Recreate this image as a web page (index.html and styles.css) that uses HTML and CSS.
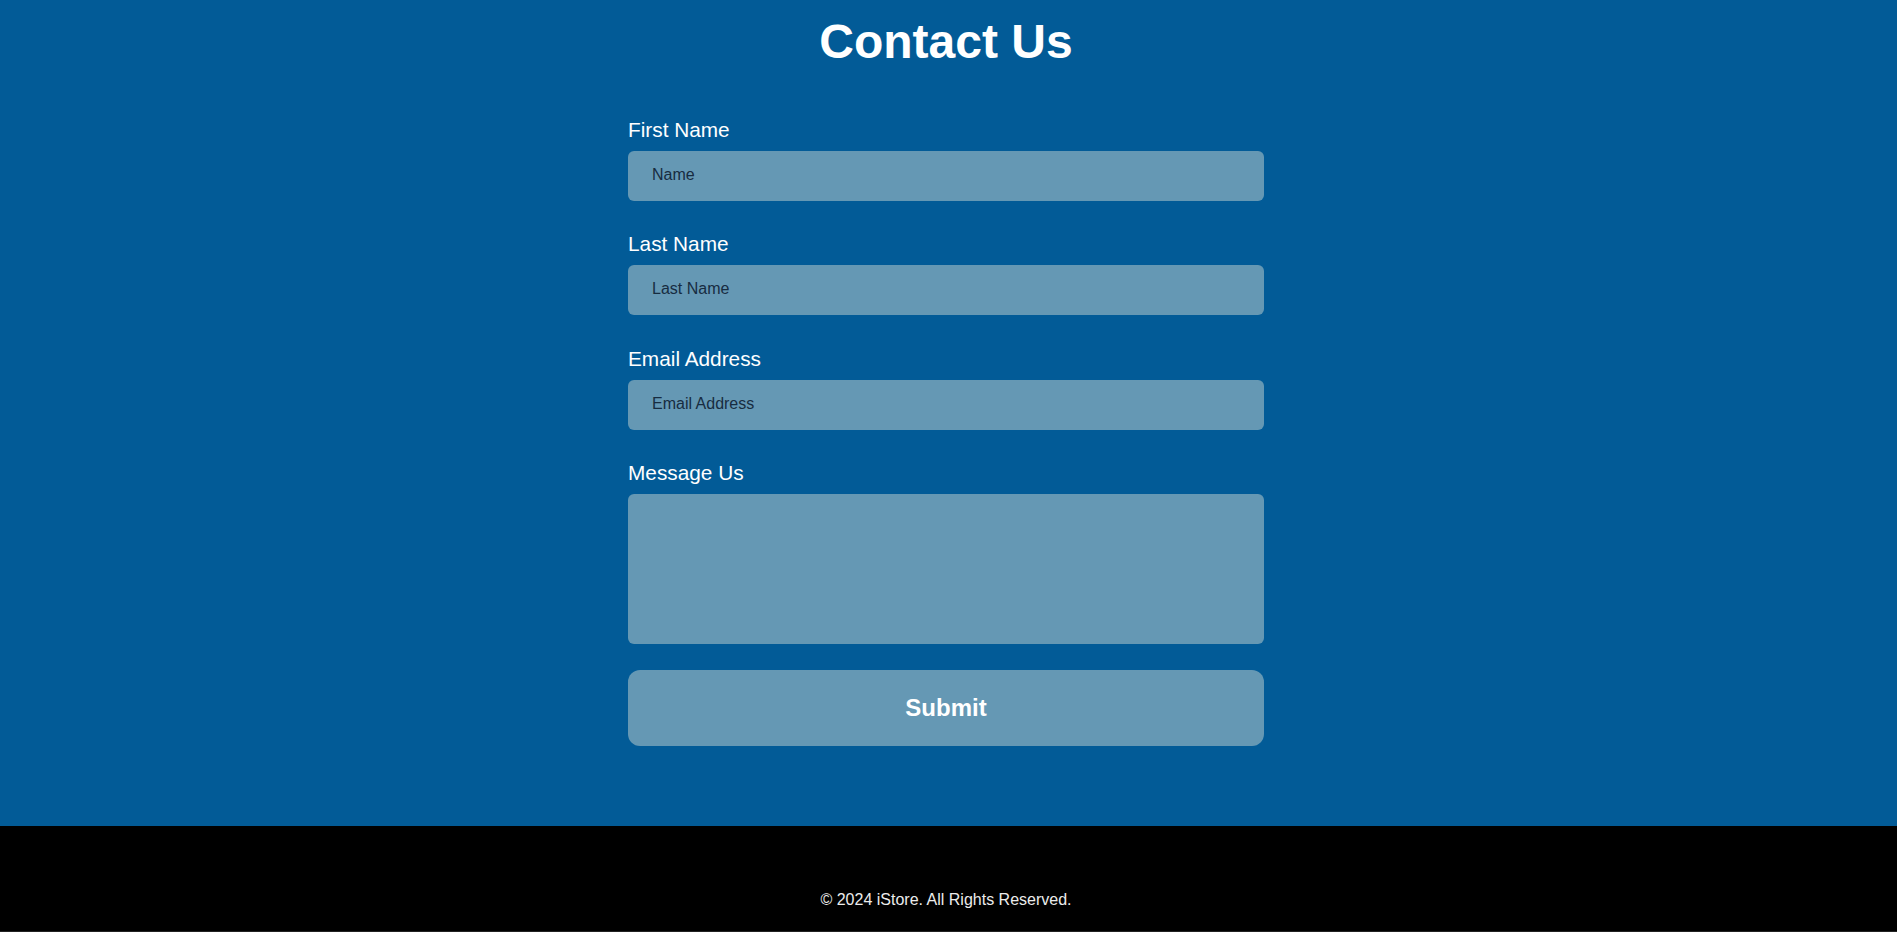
FILE: index.html
```html
<!DOCTYPE html>
<html lang="en">
<head>
<meta charset="utf-8">
<title>Contact Us - iStore</title>
<link rel="stylesheet" href="styles.css">
</head>
<body>
<main class="contact">
  <h1 class="contact-title">Contact Us</h1>
  <form class="contact-form">
    <div class="field">
      <label class="field-label" for="first">First Name</label>
      <input class="field-input" id="first" type="text" placeholder="Name">
    </div>
    <div class="field">
      <label class="field-label" for="last">Last Name</label>
      <input class="field-input" id="last" type="text" placeholder="Last Name">
    </div>
    <div class="field">
      <label class="field-label" for="email">Email Address</label>
      <input class="field-input" id="email" type="email" placeholder="Email Address">
    </div>
    <div class="field">
      <label class="field-label" for="msg">Message Us</label>
      <textarea class="field-input field-textarea" id="msg"></textarea>
    </div>
    <button class="submit-btn" type="button">Submit</button>
  </form>
</main>
<footer class="site-footer">
  <p class="footer-text">© 2024 iStore. All Rights Reserved.</p>
</footer>
</body>
</html>
```

FILE: styles.css
```css
* {
  box-sizing: border-box;
}

html, body {
  margin: 0;
  padding: 0;
}

body {
  font-family: "Liberation Sans", Arial, sans-serif;
  background: #000;
}

.contact {
  background: #025b97;
  height: 826px;
  padding: 14px 5px 0 0;
}

.contact-title {
  margin: 0;
  font-size: 48px;
  line-height: 55px;
  font-weight: 700;
  color: #fff;
  text-align: center;
}

.contact-form {
  width: 636px;
  margin: 49px auto 0;
  display: flex;
  flex-direction: column;
  gap: 31.4px;
}

.field {
  display: flex;
  flex-direction: column;
  gap: 10px;
}

.field-label {
  font-size: 20.8px;
  line-height: 23px;
  color: #fff;
}

.field-input {
  display: block;
  width: 100%;
  height: 50px;
  border: none;
  border-radius: 6px;
  background: #6598b4;
  padding: 0 24px 2px;
  font-family: "Liberation Sans", Arial, sans-serif;
  font-size: 16px;
  color: #172c41;
  outline: none;
}

.field-input::placeholder {
  color: #172c41;
  opacity: 1;
}

.field-textarea {
  height: 150px;
  padding: 14px 24px;
  resize: none;
}

.submit-btn {
  margin-top: -5.4px;
  height: 76px;
  width: 100%;
  border: none;
  border-radius: 12px;
  background: #6598b4;
  color: #fff;
  font-family: "Liberation Sans", Arial, sans-serif;
  font-size: 24px;
  font-weight: 700;
  cursor: pointer;
}

.site-footer {
  background: #000;
  padding: 65px 5px 22px 0;
  border-bottom: 1px solid #222;
}

.footer-text {
  margin: 0;
  font-size: 16px;
  line-height: 18px;
  color: #ececec;
  text-align: center;
}
```
